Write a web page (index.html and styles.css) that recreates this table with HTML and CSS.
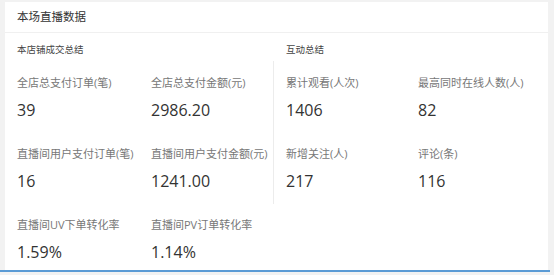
FILE: index.html
```html
<!DOCTYPE html>
<html lang="zh">
<head>
<meta charset="utf-8">
<link rel="stylesheet" href="styles.css">
</head>
<body>
<div class="page">
  <div class="card">
    <div class="card-head">本场直播数据</div>
    <div class="sections">
      <div class="section left">
        <div class="sec-title">本店铺成交总结</div>
        <div class="grid">
          <div class="metric"><div class="label">全店总支付订单(笔)</div><div class="value">39</div></div>
          <div class="metric"><div class="label">全店总支付金额(元)</div><div class="value">2986.20</div></div>
          <div class="metric"><div class="label">直播间用户支付订单(笔)</div><div class="value">16</div></div>
          <div class="metric"><div class="label">直播间用户支付金额(元)</div><div class="value">1241.00</div></div>
          <div class="metric"><div class="label">直播间UV下单转化率</div><div class="value">1.59%</div></div>
          <div class="metric"><div class="label">直播间PV订单转化率</div><div class="value">1.14%</div></div>
        </div>
      </div>
      <div class="section right">
        <div class="sec-title">互动总结</div>
        <div class="grid divided">
          <div class="metric"><div class="label">累计观看(人次)</div><div class="value">1406</div></div>
          <div class="metric"><div class="label">最高同时在线人数(人)</div><div class="value">82</div></div>
          <div class="metric"><div class="label">新增关注(人)</div><div class="value">217</div></div>
          <div class="metric"><div class="label">评论(条)</div><div class="value">116</div></div>
        </div>
      </div>
    </div>
  </div>
  <div class="bottom-bar"></div>
</div>
</body>
</html>
```
FILE: styles.css
```css
* { box-sizing: border-box; }
html, body { margin: 0; padding: 0; }
body {
  background: #f2f2f2;
  font-family: "Open Sans", "Noto Sans CJK SC", sans-serif;
  color: #333;
  width: 554px;
  height: 275px;
  overflow: hidden;
}
.page {
  padding: 2px 6px 0 5px;
}
.card {
  background: #fff;
  height: 268px;
}
.card-head {
  height: 31px;
  line-height: 30px;
  padding-left: 12px;
  font-size: 11.5px;
  color: #333;
  border-bottom: 1px solid #f0f0f0;
}
.sections {
  display: flex;
}
.section.left {
  width: 268px;
  padding-left: 12px;
}
.section.right {
  flex: 1;
}
.sec-title {
  margin-top: 8px;
  line-height: 18px;
  font-size: 9.5px;
  color: #444;
}
.section.right .sec-title {
  padding-left: 13px;
}
.grid {
  display: grid;
  grid-template-columns: 134px 134px;
  margin-top: 14px;
}
.grid.divided {
  grid-template-columns: 132px 132px;
  border-left: 1px solid #ececec;
  padding-left: 12px;
  margin-top: 2px;
  padding-top: 12px;
  height: 143px;
}
.metric {
  height: 71px;
}
.label {
  line-height: 20px;
  font-size: 11px;
  color: #777;
  white-space: nowrap;
}
.value {
  margin-top: 5px;
  line-height: 24px;
  font-size: 16px;
  color: #333;
}
.bottom-bar {
  height: 2px;
  margin-left: -5px;
  margin-right: -2px;
  background: #5b9bd5;
}
```
